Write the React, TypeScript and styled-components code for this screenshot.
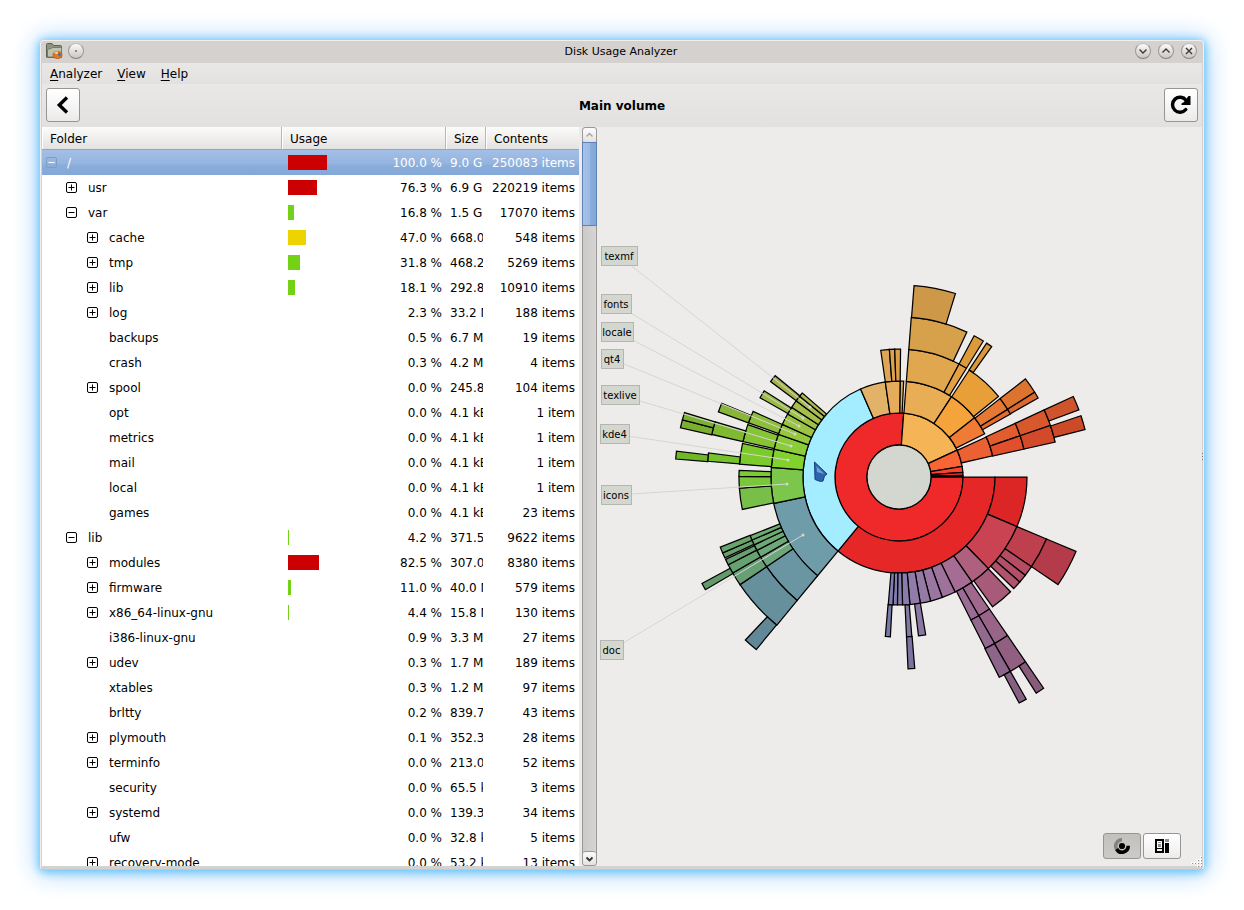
import React from "react";
import styled, { createGlobalStyle, css } from "styled-components";

const GlobalStyle = createGlobalStyle`
  *, *::before, *::after { box-sizing: border-box; }
  body { margin: 0; background: #fff; }
  button, table { font: inherit; color: inherit; }
`;

const Desktop = styled.div`
  height: 100vh;
  padding: 40px;
  font-family: "DejaVu Sans", sans-serif;
  font-size: 12px;
  color: #000;
`;

const Window = styled.div`
  height: 100%;
  display: flex;
  flex-direction: column;
  border: 1px solid #f1efed;
  border-bottom-color: #c9c6c3;
  border-radius: 4px;
  background: #d5d1ce;
  box-shadow: 0 1px 9px 1px #5cc4fb, 0 1px 26px 3px #a8d2fc;
`;

const TitleBar = styled.header`
  flex: 0 0 22px;
  display: grid;
  grid-template-columns: 1fr auto 1fr;
  align-items: center;
  padding: 0 6px 2px 4px;
  font-size: 11px;
`;

const TitleGroup = styled.div<{ $end?: boolean }>`
  display: flex;
  align-items: center;
  gap: ${(p) => (p.$end ? 7 : 5)}px;
  justify-content: ${(p) => (p.$end ? "flex-end" : "flex-start")};
`;

const RoundButton = styled.button`
  width: 16px;
  height: 16px;
  padding: 0;
  border: 1px solid #9b9794;
  border-top-color: #c2bfbc;
  border-bottom-color: #85817e;
  border-radius: 50%;
  display: grid;
  place-items: center;
  background: linear-gradient(#fbfbfb, #c9c6c3);
  svg { display: block; }
`;

const Inner = styled.div`
  position: relative;
  flex: 1;
  min-height: 0;
  margin: 0 1px 3px;
  display: flex;
  flex-direction: column;
  background: #edecea;
`;

const MenuBar = styled.nav`
  flex: 0 0 21px;
  display: flex;
  align-items: center;
  padding: 0 8px;
  gap: 15px;
  background: linear-gradient(#e9e8e7, #e2e1e0);
`;

const MenuButton = styled.button`
  padding: 0;
  border: 0;
  background: none;
  line-height: 20px;
  u { text-underline-offset: 2px; }
`;

const Toolbar = styled.div`
  flex: 0 0 43px;
  display: flex;
  align-items: center;
  justify-content: space-between;
  padding: 0 4px 2px;
  background: linear-gradient(#e9e8e7, #e2e1df);
`;

const Heading = styled.h1`
  margin: 0;
  padding-top: 2px;
  font-size: 12px;
  line-height: 16px;
`;

const ToolButton = styled.button`
  width: 34px;
  height: 34px;
  padding: 0;
  border: 1px solid #979594;
  border-radius: 3px;
  display: grid;
  place-items: center;
  background: linear-gradient(#fff, #f7f7f7 45%, #ebeae9);
`;

const Body = styled.div`
  flex: 1;
  min-height: 0;
  display: flex;
`;

const ListPane = styled.div`
  flex: 0 0 537px;
  overflow: hidden;
  background: #fff;
`;

const Table = styled.table`
  width: 100%;
  table-layout: fixed;
  border-collapse: separate;
  border-spacing: 0;
`;

const Col = styled.col<{ $w: number }>`
  width: ${(p) => p.$w}px;
`;

const HeadCell = styled.th`
  height: 23px;
  padding: 2px 8px 0;
  text-align: left;
  font-weight: normal;
  white-space: nowrap;
  border-right: 1px solid #b9b6b3;
  border-bottom: 1px solid #a5a29f;
  box-shadow: inset 1px 0 #fff;
  background: linear-gradient(#fbfbfa, #f0efee 50%, #e4e2e0);
  &:last-child { border-right: 0; }
`;

const Row = styled.tr<{ $selected?: boolean }>`
  height: 25px;
  ${(p) =>
    p.$selected &&
    css`
      color: #fff;
      td { background: linear-gradient(#a3bfe6, #94b3de 56%, #8aaedb 60%, #83a8d8); }
    `}
`;

const Cell = styled.td<{ $right?: boolean }>`
  height: 25px;
  padding: 0 4px;
  white-space: nowrap;
  text-align: ${(p) => (p.$right ? "right" : "left")};
`;

const SizeCell = styled.td`
  padding: 0 3px 0 4px;
`;

const Clip = styled.div`
  overflow: hidden;
  white-space: nowrap;
`;

const FolderName = styled.div<{ $level: number }>`
  display: grid;
  grid-template-columns: 22px 1fr;
  align-items: center;
  padding-left: ${(p) => p.$level * 21 - 1}px;
  ${(p) => p.$level === 0 && "padding-left: 0; grid-template-columns: 21px 1fr;"}
`;

const Expander = styled.button`
  width: 11px;
  height: 11px;
  padding: 0;
  border: 0;
  background: none;
  color: inherit;
  svg { display: block; }
`;

const UsageLine = styled.div`
  display: flex;
  align-items: center;
  justify-content: space-between;
  padding-left: 2px;
`;

const Bar = styled.span<{ $color: string }>`
  height: 15px;
  background: ${(p) => p.$color};
`;

const Scrollbar = styled.div`
  flex: 0 0 15px;
  margin-left: 3px;
  display: flex;
  flex-direction: column;
  border: 1px solid #9a9896;
  border-radius: 3px;
  background: linear-gradient(90deg, #cbcac8, #d6d5d3);
`;

const ScrollButton = styled.button`
  height: 14px;
  padding: 0;
  border: 0;
  display: grid;
  place-items: center;
  border-radius: 3px;
  background: linear-gradient(#fcfcfc, #e3e2e1);
  &:last-child { border-top: 1px solid #9a9896; }
`;

const Thumb = styled.div`
  height: 84px;
  margin: 0 -1px;
  border: 1px solid #5c81b5;
  background: linear-gradient(90deg, #a5c2e8, #9bbae4 50%, #88acdb 55%, #82a7d8);
`;

const Track = styled.div`
  flex: 1;
`;

const ChartPane = styled.main`
  position: relative;
  flex: 1;
  min-width: 0;
  background: #edecea;
`;

const Chart = styled.svg`
  display: block;
  width: 100%;
  height: 100%;
  text { font-size: 10px; }
`;

const ViewSwitch = styled.div`
  position: absolute;
  right: 21px;
  bottom: 7px;
  display: flex;
  gap: 2px;
`;

const ViewButton = styled.button<{ $active?: boolean }>`
  width: 38px;
  height: 26px;
  padding: 0;
  display: grid;
  place-items: center;
  border: 1px solid #979594;
  border-radius: 3px;
  background: ${(p) => (p.$active ? "linear-gradient(#c3c1be, #cccac7)" : "linear-gradient(#fff, #f7f7f7 45%, #ecebea)")};
`;

const Grip = styled.svg`
  position: absolute;
  right: -1px;
  bottom: -3px;
`;

const EdgeHandle = styled.svg`
  position: absolute;
  right: -1px;
  top: 50%;
  margin-top: -12px;
`;

const RED = "#cc0000";
const GREEN = "#73d216";
const YELLOW = "#edd400";

type Folder = {
  name: string;
  level: number;
  open?: boolean;
  pct: string;
  bar?: number;
  color?: string;
  size: string;
  items: string;
};

const f = (
  level: number,
  name: string,
  open: boolean | undefined,
  pct: string,
  size: string,
  items: string,
  bar = 0,
  color = GREEN
): Folder => ({ level, name, open, pct, size, items, bar, color });

const folders: Folder[] = [
  f(0, "/", true, "100.0 %", "9.0 GB", "250083 items", 39, RED),
  f(1, "usr", false, "76.3 %", "6.9 GB", "220219 items", 29, RED),
  f(1, "var", true, "16.8 %", "1.5 GB", "17070 items", 6),
  f(2, "cache", false, "47.0 %", "668.0 MB", "548 items", 18, YELLOW),
  f(2, "tmp", false, "31.8 %", "468.2 MB", "5269 items", 12),
  f(2, "lib", false, "18.1 %", "292.8 MB", "10910 items", 7),
  f(2, "log", false, "2.3 %", "33.2 MB", "188 items"),
  f(2, "backups", undefined, "0.5 %", "6.7 MB", "19 items"),
  f(2, "crash", undefined, "0.3 %", "4.2 MB", "4 items"),
  f(2, "spool", false, "0.0 %", "245.8 kB", "104 items"),
  f(2, "opt", undefined, "0.0 %", "4.1 kB", "1 item"),
  f(2, "metrics", undefined, "0.0 %", "4.1 kB", "1 item"),
  f(2, "mail", undefined, "0.0 %", "4.1 kB", "1 item"),
  f(2, "local", undefined, "0.0 %", "4.1 kB", "1 item"),
  f(2, "games", undefined, "0.0 %", "4.1 kB", "23 items"),
  f(1, "lib", true, "4.2 %", "371.5 MB", "9622 items", 1),
  f(2, "modules", false, "82.5 %", "307.0 MB", "8380 items", 31, RED),
  f(2, "firmware", false, "11.0 %", "40.0 MB", "579 items", 3),
  f(2, "x86_64-linux-gnu", false, "4.4 %", "15.8 MB", "130 items", 1),
  f(2, "i386-linux-gnu", undefined, "0.9 %", "3.3 MB", "27 items"),
  f(2, "udev", false, "0.3 %", "1.7 MB", "189 items"),
  f(2, "xtables", undefined, "0.3 %", "1.2 MB", "97 items"),
  f(2, "brltty", undefined, "0.2 %", "839.7 kB", "43 items"),
  f(2, "plymouth", false, "0.1 %", "352.3 kB", "28 items"),
  f(2, "terminfo", false, "0.0 %", "213.0 kB", "52 items"),
  f(2, "security", undefined, "0.0 %", "65.5 kB", "3 items"),
  f(2, "systemd", false, "0.0 %", "139.3 kB", "34 items"),
  f(2, "ufw", undefined, "0.0 %", "32.8 kB", "5 items"),
  f(2, "recovery-mode", false, "0.0 %", "53.2 kB", "13 items"),
];

/* Ring sectors: [ring, start angle, end angle, fill]; angles run clockwise from three o'clock. */
type Sector = [number, number, number, string];
const sectors: Sector[] = [
  [1, 0, 274.2, "#ef2929"],
  [1, 274.2, 335.2, "#f5b455"],
  [1, 335.2, 350.5, "#f96535"],
  [1, 350.5, 355.9, "#f7432f"],
  [1, 355.9, 358.5, "#ea2b28"],
  [1, 358.5, 359.4, "#8c8c88"],
  [2, 0, 129.5, "#e62728"],
  [2, 129.5, 246.4, "#a4ecff"],
  [2, 246.4, 261.8, "#e1b267"],
  [2, 261.8, 270.8, "#e5ac5b"],
  [2, 270.8, 272.8, "#e5a854"],
  [2, 274.4, 303.2, "#e9ae55"],
  [2, 303.2, 321.9, "#f5a43c"],
  [2, 321.9, 333.2, "#f07b35"],
  [2, 335.4, 347.3, "#ec6133"],
  [3, 261.8, 265.7, "#dca656"],
  [3, 265.7, 268.1, "#dca24d"],
  [3, 268.1, 270.7, "#dca048"],
  [3, 274.4, 298, "#e0a74f"],
  [3, 298, 301.8, "#e2a043"],
  [3, 303.3, 321, "#e99f38"],
  [3, 322.2, 328.1, "#e57832"],
  [3, 328.1, 330.5, "#e36c31"],
  [3, 335.2, 341.2, "#e25c30"],
  [3, 341.2, 347.4, "#e24f2d"],
  [4, 274.4, 295.1, "#d7a04b"],
  [4, 298, 301.8, "#dd9a3b"],
  [4, 303.2, 305.4, "#dc9838"],
  [4, 322.2, 328, "#dc732f"],
  [4, 328, 330.4, "#da692e"],
  [4, 335.2, 341.2, "#d8582d"],
  [4, 341.2, 347.4, "#d24a2a"],
  [5, 274.5, 287.1, "#cd9848"],
  [5, 335.2, 339.5, "#ce542b"],
  [5, 341.4, 345.7, "#cd4a28"],

  [3, 0, 22.8, "#dc2525"],
  [3, 22.8, 45.7, "#c94353"],
  [3, 45.7, 55.2, "#b0607f"],
  [3, 55.2, 64, "#a76c93"],
  [3, 64, 70.2, "#9f729c"],
  [3, 70.2, 75.7, "#9977a1"],
  [3, 75.7, 80.4, "#957aa5"],
  [3, 80.4, 85.1, "#917ba9"],
  [3, 85.1, 88.4, "#8a7cac"],
  [3, 88.4, 90.7, "#857cad"],
  [3, 90.7, 92.7, "#827dae"],
  [3, 92.7, 94.8, "#7e7fae"],
  [4, 22.8, 34.1, "#be404f"],
  [4, 34.1, 37.9, "#b64c63"],
  [4, 37.9, 41, "#b34f68"],
  [4, 41, 44.2, "#b1526e"],
  [4, 45.8, 54.2, "#a85b78"],
  [4, 55.6, 60.1, "#a1688e"],
  [4, 60.1, 63.3, "#9b6c96"],
  [4, 80.4, 83, "#8a77a2"],
  [4, 85.4, 87.3, "#8278a4"],
  [4, 93.1, 94.9, "#797ba7"],
  [5, 22.8, 34.1, "#b43b49"],
  [5, 55.6, 60.1, "#986487"],
  [5, 60.1, 63.3, "#94698f"],
  [5, 85.3, 87.3, "#7c739e"],
  [6, 55.6, 60.2, "#905f81"],
  [6, 60.2, 63.4, "#8e658a"],
  [7, 55.6, 57.6, "#875b79"],
  [7, 60.2, 62, "#856083"],

  [3, 129.5, 168.1, "#6e9da9"],
  [3, 168.1, 184.3, "#7cc64c"],
  [3, 184.3, 192.6, "#82d22e"],
  [3, 192.6, 199.5, "#8acd38"],
  [3, 199.5, 204.3, "#94c83f"],
  [3, 204.3, 209.5, "#9ac344"],
  [3, 209.5, 213, "#a0c148"],
  [3, 213, 216.5, "#a6bf4c"],
  [3, 216.5, 219.1, "#aabc4f"],
  [3, 219.1, 221, "#afb951"],
  [4, 129.5, 145.9, "#6996a2"],
  [4, 145.9, 149.9, "#6ea67c"],
  [4, 149.9, 152.7, "#6da87a"],
  [4, 152.7, 154.9, "#6da976"],
  [4, 154.9, 156.8, "#6daa73"],
  [4, 156.8, 158.5, "#6dab70"],
  [4, 168.3, 176, "#78bf4a"],
  [4, 176, 180.2, "#7ac83a"],
  [4, 180.2, 182.4, "#7cca34"],
  [4, 184.6, 192.1, "#7dca2d"],
  [4, 192.8, 199.1, "#86c335"],
  [4, 199.8, 204.2, "#8ebf3c"],
  [4, 209.7, 212.6, "#9bba47"],
  [4, 216.6, 219.3, "#a5b44d"],
  [5, 129.5, 145.9, "#66909c"],
  [5, 145.9, 150, "#689f74"],
  [5, 150, 152.8, "#67a071"],
  [5, 152.8, 154.6, "#67a16f"],
  [5, 155.1, 156.7, "#67a26d"],
  [5, 156.7, 158.6, "#67a36a"],
  [5, 184.7, 187.2, "#77c12a"],
  [5, 192.8, 196.7, "#80ba33"],
  [5, 199.8, 202.6, "#89b639"],
  [6, 129.6, 133.3, "#608896"],
  [6, 149.8, 151.6, "#64996b"],
  [6, 184.6, 186.6, "#71b828"],
  [6, 192.7, 194.8, "#7aaf31"],
  [6, 194.8, 196.7, "#7cb032"],
];

const RING = 32;
const CX = 302;
const CY = 350;

const point = (r: number, deg: number) => {
  const a = (deg * Math.PI) / 180;
  return `${(CX + r * Math.cos(a)).toFixed(2)} ${(CY + r * Math.sin(a)).toFixed(2)}`;
};

const sectorPath = ([ring, a0, a1]: Sector) => {
  const r0 = ring * RING;
  const r1 = r0 + RING;
  const large = a1 - a0 > 180 ? 1 : 0;
  return `M${point(r0, a0)}L${point(r1, a0)}A${r1} ${r1} 0 ${large} 1 ${point(r1, a1)}L${point(r0, a1)}A${r0} ${r0} 0 ${large} 0 ${point(r0, a0)}Z`;
};

/* Callouts: text, box x / y / width, and the sector point they lead to. */
const callouts = [
  { text: "texmf", x: 4, y: 119, w: 36, tx: 213, ty: 280 },
  { text: "fonts", x: 4, y: 167, w: 30, tx: 206, ty: 291 },
  { text: "locale", x: 4, y: 195, w: 32, tx: 202, ty: 299 },
  { text: "qt4", x: 4, y: 222, w: 22, tx: 198, ty: 307 },
  { text: "texlive", x: 4, y: 258, w: 38, tx: 194, ty: 319 },
  { text: "kde4", x: 3, y: 297, w: 29, tx: 191, ty: 333 },
  { text: "icons", x: 4, y: 358, w: 30, tx: 190, ty: 357 },
  { text: "doc", x: 3, y: 513, w: 23, tx: 206, ty: 408 },
];

const ExpanderIcon = ({ open, root }: { open: boolean; root: boolean }) => (
  <svg width="11" height="11" viewBox="0 0 11 11" fill="none">
    <rect x="0.5" y="0.5" width="10" height="10" rx="1.5" stroke={root ? "#7d9cc8" : "currentColor"} />
    <path d={open ? "M2.5 5.5H8.5" : "M2.5 5.5H8.5M5.5 2.5V8.5"} stroke="currentColor" />
  </svg>
);

const Glyph = ({ d }: { d: string }) => (
  <svg width="14" height="14" viewBox="0 0 14 14" fill="none" stroke="#3c3a38" strokeWidth="1.4">
    <path d={d} />
  </svg>
);

const AppIcon = () => (
  <svg width="18" height="18" viewBox="0 0 18 18">
    <path d="M1.5 15V2.5Q1.5 1.5 2.5 1.5H7L8.5 3.5H15.5Q16.5 3.5 16.5 4.5V15Q16.5 15.5 15.5 15.5H2.5Q1.5 15.5 1.5 15Z" fill="#8d9480" stroke="#5b5f50" />
    <path d="M2.5 15V8Q2.5 7 3.5 7L6 6.500L7.500 5.500H15.500Q16.500 5.500 16.500 6.500V15Z" fill="#bfc3ae" stroke="#777b69" />
    <ellipse cx="12.5" cy="13" rx="4.5" ry="3.5" fill="#e8781e" stroke="#b04c0a" strokeWidth=".7" />
    <path d="M12.5 12.5L9 10.8A4.5 3.5 0 0 1 13 9.6Z" fill="#f5d3a0" />
    <path d="M12.500 12.500L14 10.500A4 3 0 0 1 15 14.800Z" fill="#3d72b8" />
  </svg>
);

export default function App() {
  return (
    <>
      <GlobalStyle />
      <Desktop>
        <Window>
          <TitleBar>
            <TitleGroup>
              <AppIcon />
              <RoundButton aria-label="Pin window">
                <svg width="2" height="2"><rect width="2" height="2" fill="#888" /></svg>
              </RoundButton>
            </TitleGroup>
            <span>Disk Usage Analyzer</span>
            <TitleGroup $end>
              <RoundButton aria-label="Minimize"><Glyph d="M3.5 5.5L7 9L10.5 5.5" /></RoundButton>
              <RoundButton aria-label="Maximize"><Glyph d="M3.5 8.5L7 5L10.5 8.5" /></RoundButton>
              <RoundButton aria-label="Close"><Glyph d="M4 4L10 10M10 4L4 10" /></RoundButton>
            </TitleGroup>
          </TitleBar>
          <Inner>
            <MenuBar>
              <MenuButton><u>A</u>nalyzer</MenuButton>
              <MenuButton><u>V</u>iew</MenuButton>
              <MenuButton><u>H</u>elp</MenuButton>
            </MenuBar>
            <Toolbar>
              <ToolButton aria-label="Back">
                <svg width="16" height="18" viewBox="0 0 16 18" fill="none" stroke="#000" strokeWidth="3.4">
                  <path d="M12 1.5L4.300 9L12 16.500" />
                </svg>
              </ToolButton>
              <Heading>Main volume</Heading>
              <ToolButton aria-label="Rescan">
                <svg width="22" height="22" viewBox="0 0 22 22" fill="none" stroke="#000" strokeWidth="3.4">
                  <path d="M16 6.2A7.500 7.500 0 1 0 15.800 15.500" strokeLinecap="round" />
                  <path d="M20.500 2V11H11.500V9.500L14 8L18.500 2Z" fill="#000" stroke="none" />
                </svg>
              </ToolButton>
            </Toolbar>
            <Body>
              <ListPane>
                <Table>
                  <colgroup>
                    <Col $w={240} />
                    <Col $w={164} />
                    <Col $w={40} />
                    <Col $w={93} />
                  </colgroup>
                  <thead>
                    <tr>
                      <HeadCell>Folder</HeadCell>
                      <HeadCell>Usage</HeadCell>
                      <HeadCell>Size</HeadCell>
                      <HeadCell>Contents</HeadCell>
                    </tr>
                  </thead>
                  <tbody>
                    {folders.map((row, i) => (
                      <Row key={i} $selected={i === 0}>
                        <Cell>
                          <FolderName $level={row.level}>
                            {row.open === undefined ? (
                              <span />
                            ) : (
                              <Expander aria-label={row.open ? "Collapse" : "Expand"}>
                                <ExpanderIcon open={row.open} root={row.level === 0} />
                              </Expander>
                            )}
                            <span>{row.name}</span>
                          </FolderName>
                        </Cell>
                        <Cell>
                          <UsageLine>
                            <Bar $color={row.color!} style={{ width: row.bar }} />
                            <span>{row.pct}</span>
                          </UsageLine>
                        </Cell>
                        <SizeCell><Clip>{row.size}</Clip></SizeCell>
                        <Cell $right>{row.items}</Cell>
                      </Row>
                    ))}
                  </tbody>
                </Table>
              </ListPane>
              <Scrollbar>
                <ScrollButton aria-label="Scroll up">
                  <svg width="9" height="6" fill="none" stroke="#a9a7a5" strokeWidth="1.5"><path d="M1.5 4.5L4.5 1.5L7.5 4.5" /></svg>
                </ScrollButton>
                <Thumb />
                <Track />
                <ScrollButton aria-label="Scroll down">
                  <svg width="9" height="6" fill="none" stroke="#333" strokeWidth="1.8"><path d="M1.5 1.5L4.5 4.5L7.5 1.5" /></svg>
                </ScrollButton>
              </Scrollbar>
              <ChartPane>
                <Chart viewBox="0 0 605 739" preserveAspectRatio="xMinYMin meet" role="img" aria-label="Rings chart">
                  <g stroke="#000" strokeWidth="1.25">
                    {sectors.map((s, i) => (
                      <path key={i} d={sectorPath(s)} fill={s[3]} />
                    ))}
                    <circle cx={CX} cy={CY} r={RING} fill="#d3d7cf" />
                  </g>
                  {callouts.map((c) => (
                    <g key={c.text}>
                      <path d={`M${c.x + c.w / 2} ${c.y + 10}L${c.tx} ${c.ty}`} stroke="#d3d7cf" />
                      <circle cx={c.tx} cy={c.ty} r="1.5" fill="#d3d7cf" />
                      <rect x={c.x + 0.5} y={c.y + 0.5} width={c.w} height="19" fill="#d3d7cf" stroke="#b3b7af" />
                      <text x={c.x + c.w / 2} y={c.y + 14} textAnchor="middle">{c.text}</text>
                    </g>
                  ))}
                  <path d="M217.5 335L230 347L227.5 349L226 354L223.5 354.5L218 352.5Z" fill="#2c64ab" stroke="#123f7d" />
                  <path d="M219.5 339L227.5 347L220 345Z" fill="#6d9fd4" />
                </Chart>
                <ViewSwitch>
                  <ViewButton $active aria-label="Rings chart">
                    <svg width="18" height="18" viewBox="0 0 18 18" fill="none">
                      <path d="M3.5 12A6.2 6.2 0 0 1 9 2.8" stroke="#858381" strokeWidth="3.6" />
                      <path d="M3.6 12A6.2 6.2 0 0 0 15.2 8.8" stroke="#000" strokeWidth="3.6" />
                      <circle cx="9" cy="9" r="3.1" fill="#000" />
                    </svg>
                  </ViewButton>
                  <ViewButton aria-label="Treemap chart">
                    <svg width="14" height="14" viewBox="0 0 14 14" shapeRendering="crispEdges">
                      <path d="M0 0H9V14H0ZM2 2V9H7V2ZM2 10V12H7V10Z" fillRule="evenodd" />
                      <path d="M3 3H6V4H3ZM3 5H6V8H3ZM10 0H14V3H10Z" fill="#8f8f8f" />
                      <path d="M10 4H14V14H10Z" />
                    </svg>
                  </ViewButton>
                </ViewSwitch>
              </ChartPane>
            </Body>
            <EdgeHandle width="1" height="8" fill="#77736f" aria-hidden="true">
              <rect width="1" height="1" />
              <rect y="3" width="1" height="1" />
              <rect y="6" width="1" height="1" />
            </EdgeHandle>
            <Grip width="12" height="13" aria-hidden="true">
              {[[9, 0], [6, 3], [9, 3], [3, 6], [6, 6], [9, 6], [0, 6], [9, 9], [6, 9]].map(([x, y]) => (
                <g key={`${x}-${y}`}>
                  <rect x={x} y={y} width="2" height="2" fill="#fff" />
                  <rect x={x + 1} y={y + 1} width="1" height="1" fill="#8f8b88" />
                </g>
              ))}
            </Grip>
          </Inner>
        </Window>
      </Desktop>
    </>
  );
}
